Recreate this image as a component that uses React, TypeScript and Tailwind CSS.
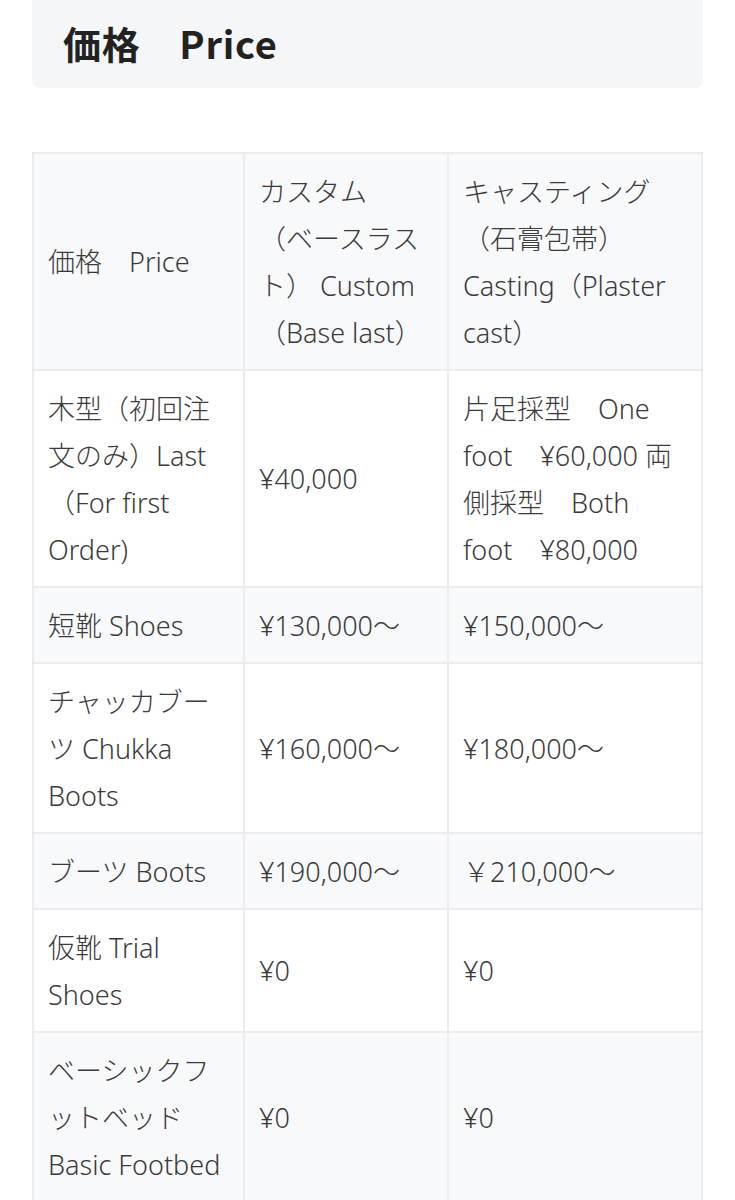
const rows: { label: string; custom: string; casting: string }[] = [
  {
    label: "木型（初回注文のみ）Last（For first Order)",
    custom: "¥40,000",
    // word joiners keep "foot　¥…" together on one line, as in the original layout
    casting: "片足採型　One foot\u2060　\u2060¥60,000 両側採型　Both foot\u2060　\u2060¥80,000",
  },
  { label: "短靴 Shoes", custom: "¥130,000〜", casting: "¥150,000〜" },
  { label: "チャッカブーツ Chukka Boots", custom: "¥160,000〜", casting: "¥180,000〜" },
  { label: "ブーツ Boots", custom: "¥190,000〜", casting: "￥210,000〜" },
  { label: "仮靴 Trial Shoes", custom: "¥0", casting: "¥0" },
  { label: "ベーシックフットベッド Basic Footbed", custom: "¥0", casting: "¥0" },
];

export default function App(): React.ReactElement {
  return (
    <main className="min-h-[1200px] w-full bg-white px-8 font-['Noto_Sans_CJK_JP','Noto_Sans',sans-serif] text-[#333]">
      <h2 className="flex h-[88px] items-center rounded-b-lg bg-[#f5f6f8] px-[31px] pb-1 text-[38px] font-bold tracking-[0.02em] text-[#222]">
        価格　Price
      </h2>

      <table className="mt-16 w-full table-fixed border-collapse font-['Noto_Sans','Noto_Sans_CJK_JP',sans-serif] text-[27px] font-light leading-[47px] text-[#3a3a3a]">
        <colgroup>
          <col className="w-[211px]" />
          <col className="w-[204px]" />
          <col />
        </colgroup>
        <tbody>
          <tr className="bg-[#f8f9fb]">
            <Cell>価格　Price</Cell>
            <Cell>
              カスタム
              <br />
              （ベースラスト） Custom（Base last）
            </Cell>
            <Cell>キャスティング（石膏包帯）Casting（Plaster cast）</Cell>
          </tr>
          {rows.map((row, i) => (
            <tr key={row.label} className={i % 2 === 0 ? "bg-white" : "bg-[#f8f9fb]"}>
              <Cell>{row.label}</Cell>
              <Cell>{row.custom}</Cell>
              <Cell>{row.casting}</Cell>
            </tr>
          ))}
        </tbody>
      </table>
    </main>
  );
}

function Cell({ children }: { children: React.ReactNode }): React.ReactElement {
  return (
    <td className="border-2 border-[#ececee] px-[14px] py-[13.5px] text-left align-middle break-words">
      {children}
    </td>
  );
}
